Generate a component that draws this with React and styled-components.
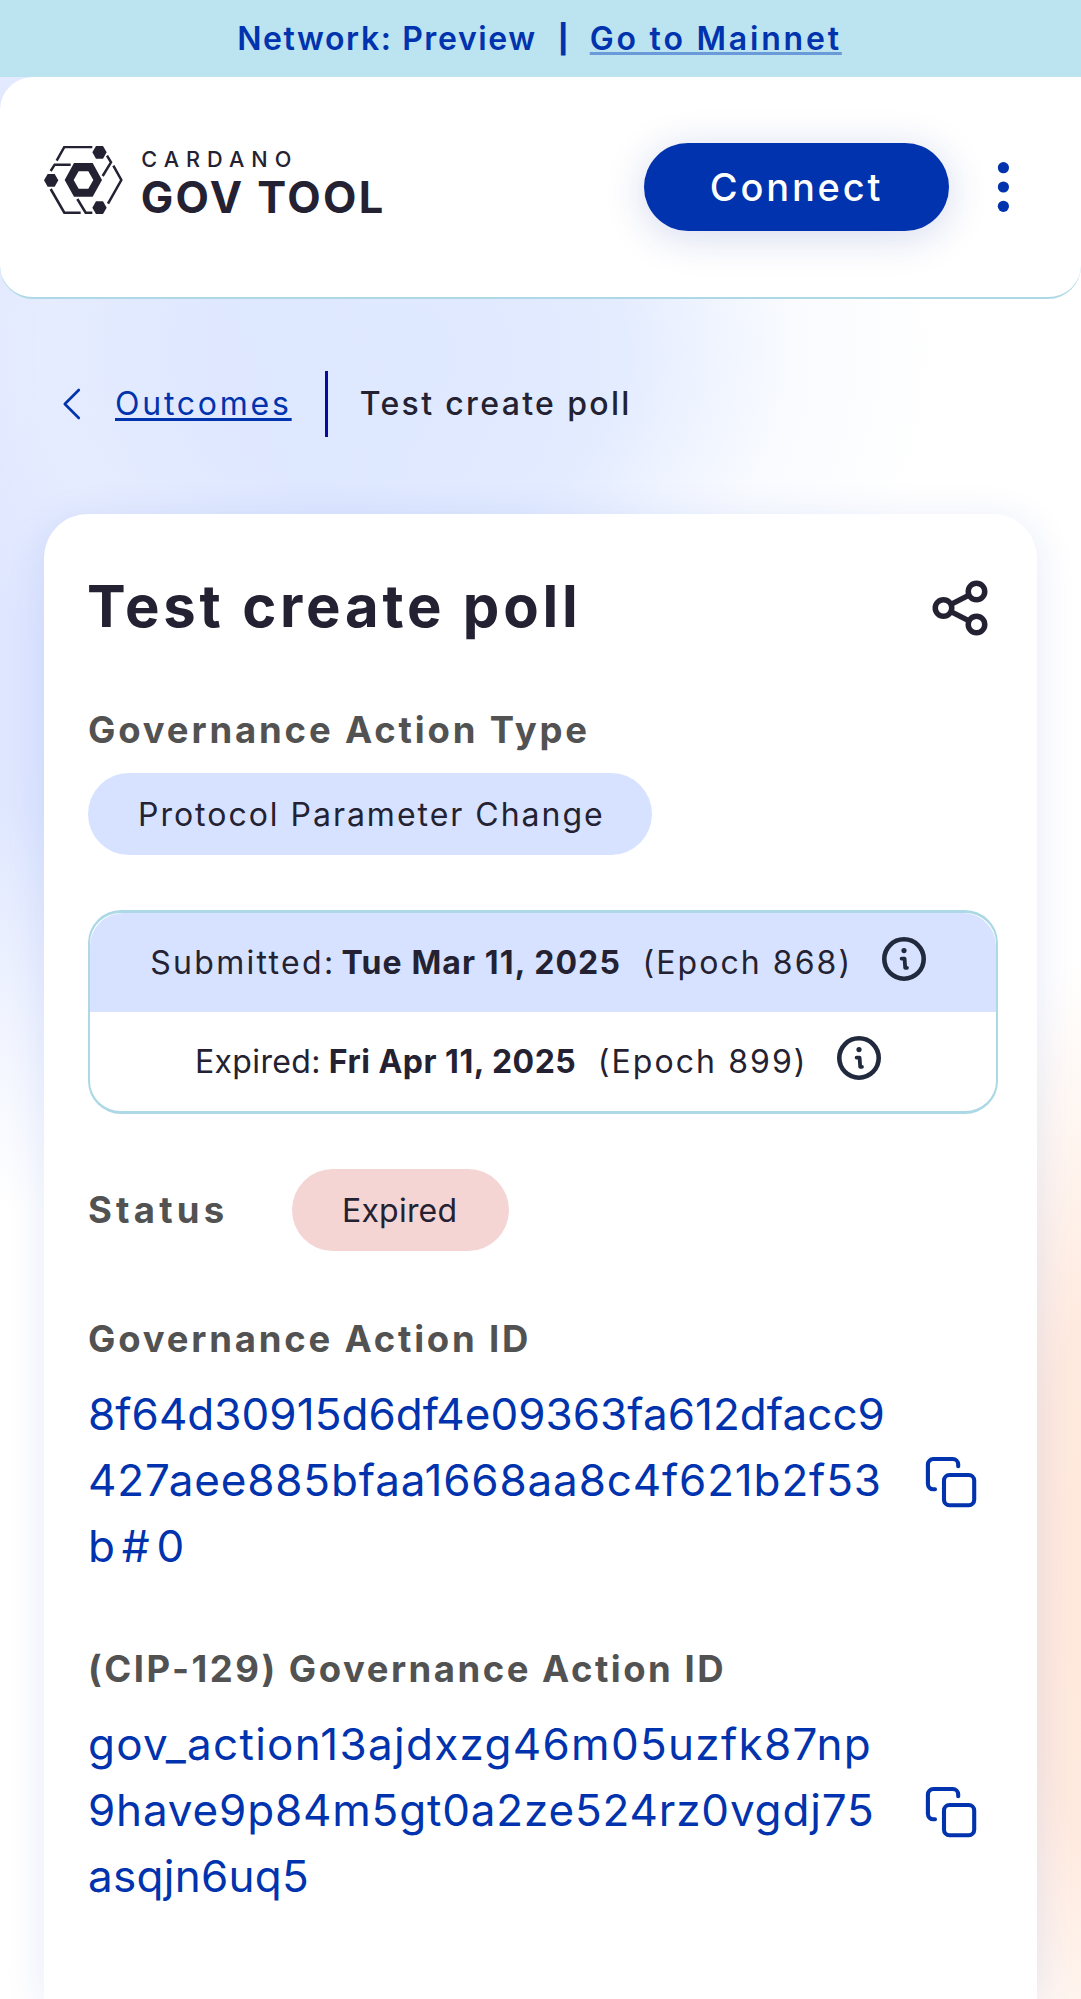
import React from "react";
import styled, { createGlobalStyle } from "styled-components";

const color = {
  blue: "#0033ad",
  ink: "#242232",
  grey: "#525252",
  teal: "#add8e6",
  lilac: "#d6e2ff",
};

const GlobalStyle = createGlobalStyle`
  *, *::before, *::after { box-sizing: border-box; }
  body {
    margin: 0;
    background: #fff;
    color: ${color.ink};
    font-family: Inter, "Open Sans", sans-serif;
  }
`;

const Page = styled.div`
  display: flex;
  flex-direction: column;
  width: 100%;
  height: 1999px;
  overflow: hidden;
  background:
    radial-gradient(ellipse 240px 640px at 1130px 1580px, #ffe8da 0%, #ffeadf 45%, rgba(255, 238, 228, 0.6) 70%, rgba(255, 255, 255, 0) 100%),
    radial-gradient(ellipse 520px 430px at 420px 350px, rgba(222, 232, 255, 0.95) 0%, rgba(222, 232, 255, 0.8) 40%, rgba(240, 245, 255, 0.4) 72%, rgba(255, 255, 255, 0) 100%),
    radial-gradient(ellipse 600px 740px at 60px 470px, #dfe6ff 0%, #dfe7ff 46%, rgba(224, 232, 255, 0.6) 68%, rgba(255, 255, 255, 0) 100%),
    #fff;
`;

const Text = styled.span`
  font-size: ${(p) => p.$size || 32}px;
  font-weight: ${(p) => p.$weight || 400};
  letter-spacing: ${(p) => p.$track || 0}px;
  white-space: nowrap;
`;

const Banner = styled.div`
  display: flex;
  flex: none;
  align-items: center;
  justify-content: center;
  height: 77px;
  padding-right: 2px;
  background: #bce3f0;
  color: ${color.blue};
`;

const BannerDivider = styled.span`
  width: 53px;
  text-align: center;
  font-size: 28px;
  font-weight: 800;
`;

const BannerLink = styled.a`
  color: inherit;
  font-size: 32px;
  font-weight: 600;
  letter-spacing: 2.8px;
  text-decoration: underline;
  text-decoration-color: #6b9ad8;
  text-decoration-thickness: 3px;
  text-decoration-skip-ink: none;
  text-underline-offset: 2px;
`;

const Header = styled.header`
  display: flex;
  flex: none;
  align-items: center;
  height: 222px;
  padding: 0 44px;
  background: #fff;
  border-bottom: 2px solid ${color.teal};
  border-radius: 33px;
`;

const ConnectButton = styled.button`
  width: 305px;
  height: 88px;
  margin-left: auto;
  padding: 0;
  border: 0;
  border-radius: 44px;
  background: ${color.blue};
  box-shadow: 0 6px 40px rgba(20, 50, 160, 0.18);
  color: #fff;
  font: 500 38px Inter, sans-serif;
  letter-spacing: 2.8px;
`;

const MenuButton = styled.button`
  display: flex;
  margin-left: 22px;
  padding: 0;
  border: 0;
  background: none;
`;

const Breadcrumbs = styled.nav`
  display: flex;
  flex: none;
  align-items: center;
  height: 67px;
  margin: 71px 0 77px;
  padding-left: 61px;
`;

const BackLink = styled.a`
  margin-left: 32px;
  color: ${color.blue};
  font-size: 32px;
  letter-spacing: 2.76px;
  text-decoration: underline;
  text-decoration-thickness: 3px;
  text-decoration-skip-ink: none;
  text-underline-offset: 3px;
`;

const CrumbDivider = styled.span`
  width: 3px;
  height: 66px;
  margin: 0 32px 0 33px;
  background: #0a0aa0;
`;

const Card = styled.main`
  flex: 1;
  margin: 0 44px;
  padding: 59px 40px 0 44px;
  background: #fff;
  border-radius: 44px 44px 0 0;
  box-shadow: 0 6px 40px rgba(20, 60, 200, 0.11);
`;

const TitleRow = styled.div`
  display: flex;
  align-items: flex-end;
  justify-content: space-between;
  height: 68px;
  padding-right: 4px;
`;

const Title = styled.h1`
  align-self: flex-start;
  margin: 0 0 0 -1px;
  font-size: 58px;
  font-weight: 700;
  line-height: 66px;
  letter-spacing: 3.8px;
`;

const Label = styled.h2`
  margin: ${(p) => p.$margin || 0};
  color: ${color.grey};
  font-size: 36.5px;
  font-weight: 700;
  line-height: 52px;
  letter-spacing: ${(p) => p.$track}px;
  white-space: nowrap;
`;

const Chip = styled.div`
  display: flex;
  align-items: center;
  width: fit-content;
  height: 82px;
  padding: 0 ${(p) => p.$right}px 0 50px;
  border-radius: 41px;
  background: ${(p) => p.$fill};
`;

const Dates = styled.section`
  width: 910px;
  margin-top: 55px;
  border: 3px solid ${color.teal};
  border-right-width: 2px;
  border-left-width: 2px;
  border-radius: 33px;
`;

const DateRow = styled.div`
  display: flex;
  align-items: center;
  justify-content: center;
  height: 99px;
  padding-right: 10px;
  border-radius: ${(p) => (p.$filled ? "33px 33px 0 0" : "0")};
  background: ${(p) => (p.$filled ? color.lilac : "transparent")};
`;

const DateValue = styled.span`
  margin: 0 21.5px 0 ${(p) => p.$gap}px;
  font-size: 32px;
  font-weight: 700;
  letter-spacing: ${(p) => p.$track}px;
  white-space: nowrap;
`;

const InfoButton = styled.span`
  display: flex;
  margin: 0 0 8px 29.5px;
`;

const StatusRow = styled.div`
  display: flex;
  align-items: center;
  margin-top: 55px;
`;

const StatusLabelCell = styled.div`
  width: 204px;
`;

const IdRow = styled.div`
  display: flex;
  align-items: center;
  justify-content: space-between;
  padding-right: 13px;
`;

const IdLines = styled.div`
  display: flex;
  flex-direction: column;
  color: ${color.blue};
  line-height: 66px;
`;

const CopyButton = styled.button`
  display: flex;
  margin-top: 4px;
  padding: 0;
  border: 0;
  background: none;
`;

const Logo = () => (
  <svg width="360" height="82" viewBox="42 48 1080 246">
    <g fill="none" stroke={color.ink} strokeWidth="7.5">
      <path d="M80 92 103 51H187" />
      <path d="M62 123 74 104H122" />
      <path d="M62 177 103 248H152" />
      <path d="M142 207 167 248H187" />
      <path d="M250 107 274 150 234 221" />
      <path d="M231 77 243 97 218 138" />
    </g>
    <g fill={color.ink}>
      <path d="M42 151 53 132H74L85 151 74 170H53Z" />
      <path d="M187 67 198 48H219L230 67 219 86H198Z" />
      <path d="M187 233 198 214H219L230 233 219 252H198Z" />
      <path
        fillRule="evenodd"
        d="M104 150 132 99H188L216 150 188 200H132ZM131 150 146 176H175L190 150 175 124H146Z"
      />
      <text x="334" y="111" fontSize="65" fontWeight="500" letterSpacing="21">
        CARDANO
      </text>
      <text x="332" y="250" fontSize="130" fontWeight="700" letterSpacing="7.3">
        GOV TOOL
      </text>
    </g>
  </svg>
);

const MenuIcon = () => (
  <svg width="66" height="66" viewBox="0 0 66 66" fill={color.blue}>
    <circle cx="32.4" cy="13.7" r="5.6" />
    <circle cx="32.4" cy="33" r="5.6" />
    <circle cx="32.4" cy="52.3" r="5.6" />
  </svg>
);

const ChevronIcon = () => (
  <svg width="22" height="34" viewBox="0 0 22 34" fill="none" stroke={color.blue} strokeWidth="2.6">
    <path d="M17.8 3 3.8 17 17.8 31" strokeLinecap="round" strokeLinejoin="round" />
  </svg>
);

const ShareIcon = () => (
  <svg width="66" height="66" viewBox="0 0 24 24" fill="none" stroke={color.ink} strokeWidth="2">
    <circle cx="18" cy="6" r="3" />
    <circle cx="6" cy="12" r="3" />
    <circle cx="18" cy="18" r="3" />
    <path d="M8.7 10.7 15.3 7.3M8.7 13.3l6.6 3.4" />
  </svg>
);

const InfoIcon = () => (
  <svg width="44" height="44" viewBox="-22 -22 44 44" fill="none" stroke="#212a3d">
    <circle r="19.7" strokeWidth="4.6" />
    <path d="M-2.4-.4H.6L1.2 8.8H3" strokeWidth="3.8" strokeLinecap="round" strokeLinejoin="round" />
    <circle cy="-8.4" r="2.6" fill="#212a3d" stroke="none" />
  </svg>
);

const CopyIcon = () => (
  <svg
    width="66"
    height="66"
    viewBox="0 0 66 66"
    fill="none"
    stroke={color.blue}
    strokeWidth="4.1"
    strokeLinecap="round"
    strokeLinejoin="round"
  >
    <path d="M17 40.3H15.4A5.5 5.5 0 0 1 9.9 34.8V15.5A5.5 5.5 0 0 1 15.4 10H34.7A5.5 5.5 0 0 1 40.2 15.5V17.2" />
    <rect x="26" y="26" width="30.2" height="30.2" rx="5.5" />
  </svg>
);

const dates = [
  { name: "Submitted:", nameTrack: 2.3, gap: 6, value: "Tue Mar 11, 2025", track: 1.11, epoch: "(Epoch 868)", filled: true },
  { name: "Expired:", nameTrack: 0.36, gap: 8, value: "Fri Apr 11, 2025", track: 0.49, epoch: "(Epoch 899)", filled: false },
];

const ids = [
  {
    label: "Governance Action ID",
    track: 2.8,
    margin: "62px 0 16px",
    lines: [
      ["8f64d30915d6df4e09363fa612dfacc9", 0.04],
      ["427aee885bfaa1668aa8c4f621b2f53", 0.84],
      ["b#0", 6.9],
    ],
  },
  {
    label: "(CIP-129) Governance Action ID",
    track: 2.5,
    margin: "64px 0 16px",
    lines: [
      ["gov_action13ajdxzg46m05uzfk87np", 1.3],
      ["9have9p84m5gt0a2ze524rz0vgdj75", 0.83],
      ["asqjn6uq5", 0.28],
    ],
  },
];

export default function App() {
  return (
    <>
      <GlobalStyle />
      <Page>
        <Banner>
          <Text $weight={600} $track={1.59}>Network: Preview</Text>
          <BannerDivider>|</BannerDivider>
          <BannerLink>Go to Mainnet</BannerLink>
        </Banner>
        <Header>
          <Logo />
          <ConnectButton>Connect</ConnectButton>
          <MenuButton aria-label="Menu">
            <MenuIcon />
          </MenuButton>
        </Header>
        <Breadcrumbs>
          <ChevronIcon />
          <BackLink>Outcomes</BackLink>
          <CrumbDivider />
          <Text $weight={500} $track={2.35}>Test create poll</Text>
        </Breadcrumbs>
        <Card>
          <TitleRow>
            <Title>Test create poll</Title>
            <ShareIcon />
          </TitleRow>
          <Label $track={2.84} $margin="63px 0 17px">Governance Action Type</Label>
          <Chip $fill={color.lilac} $right={47}>
            <Text $track={1.98}>Protocol Parameter Change</Text>
          </Chip>
          <Dates>
            {dates.map((d) => (
              <DateRow key={d.name} $filled={d.filled}>
                <Text $track={d.nameTrack}>{d.name}</Text>
                <DateValue $gap={d.gap} $track={d.track}>{d.value}</DateValue>
                <Text $track={2.07}>{d.epoch}</Text>
                <InfoButton>
                  <InfoIcon />
                </InfoButton>
              </DateRow>
            ))}
          </Dates>
          <StatusRow>
            <StatusLabelCell>
              <Label as="span" $track={4.2}>Status</Label>
            </StatusLabelCell>
            <Chip $fill="#f5d5d4" $right={52}>
              <Text $track={0.21}>Expired</Text>
            </Chip>
          </StatusRow>
          {ids.map((id) => (
            <React.Fragment key={id.label}>
              <Label $track={id.track} $margin={id.margin}>{id.label}</Label>
              <IdRow>
                <IdLines>
                  {id.lines.map(([line, track]) => (
                    <Text key={line} $size={44} $track={track}>{line}</Text>
                  ))}
                </IdLines>
                <CopyButton aria-label="Copy">
                  <CopyIcon />
                </CopyButton>
              </IdRow>
            </React.Fragment>
          ))}
        </Card>
      </Page>
    </>
  );
}
